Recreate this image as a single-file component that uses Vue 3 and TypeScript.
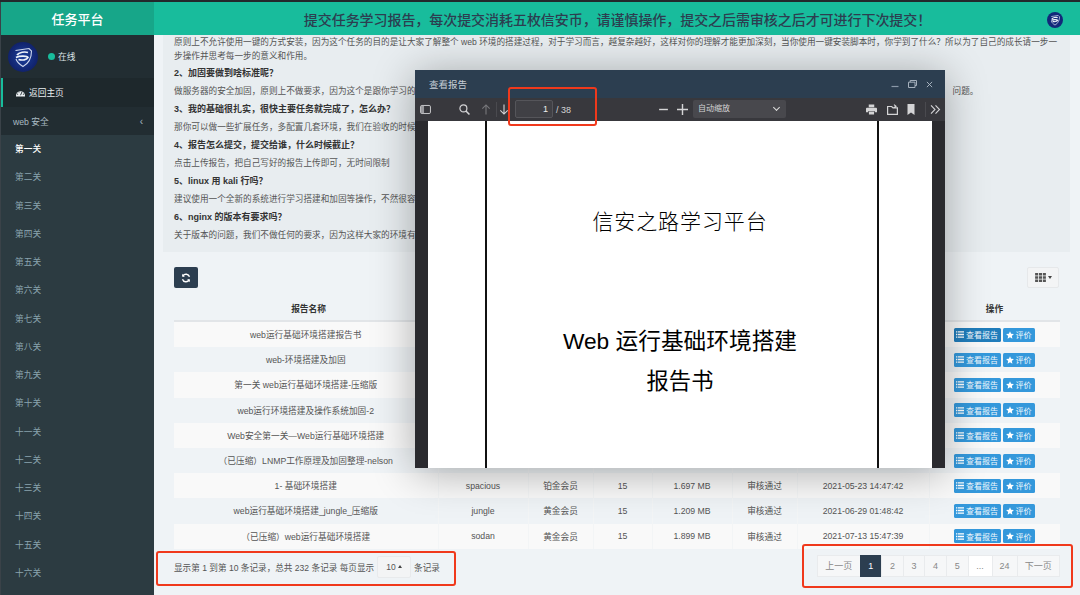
<script setup lang="ts">
interface Row {
  name: string; user: string; level: string; coin: string; size: string; state: string; time: string;
}
const levels: string[] = ['第一关','第二关','第三关','第四关','第五关','第六关','第七关','第八关','第九关','第十关','十一关','十二关','十三关','十四关','十五关','十六关'];
const rows: Row[] = [
  { name: 'web运行基础环境搭建报告书', user: '', level: '', coin: '', size: '', state: '', time: '' },
  { name: 'web-环境搭建及加固', user: '', level: '', coin: '', size: '', state: '', time: '' },
  { name: '第一关 web运行基础环境搭建-压缩版', user: '', level: '', coin: '', size: '', state: '', time: '' },
  { name: 'web运行环境搭建及操作系统加固-2', user: '', level: '', coin: '', size: '', state: '', time: '' },
  { name: 'Web安全第一关—Web运行基础环境搭建', user: '', level: '', coin: '', size: '', state: '', time: '' },
  { name: '（已压缩）LNMP工作原理及加固整理-nelson', user: '', level: '', coin: '', size: '', state: '', time: '' },
  { name: '1- 基础环境搭建', user: 'spacious', level: '铂金会员', coin: '15', size: '1.697 MB', state: '审核通过', time: '2021-05-23 14:47:42' },
  { name: 'web运行基础环境搭建_jungle_压缩版', user: 'jungle', level: '黄金会员', coin: '15', size: '1.209 MB', state: '审核通过', time: '2021-06-29 01:48:42' },
  { name: '（已压缩）web运行基础环境搭建', user: 'sodan', level: '黄金会员', coin: '15', size: '1.899 MB', state: '审核通过', time: '2021-07-13 15:47:39' },
];
const pages: string[] = ['上一页','1','2','3','4','5','...','24','下一页'];
</script>

<template>
  <div class="app">
    <aside class="sidebar">
      <div class="brand">任务平台</div>
      <div class="user">
        <svg class="avatar" viewBox="0 0 30 30">
          <defs>
            <radialGradient id="avatarFill" cx="50%" cy="50%" r="55%">
              <stop offset="0%" stop-color="#1c3f9c" />
              <stop offset="100%" stop-color="#0f1f66" />
            </radialGradient>
          </defs>
          <circle cx="15" cy="15" r="15" fill="url(#avatarFill)" />
          <path d="M7.5 8.5 L21 6.5 L23.5 9 C23.5 16 20.5 21.5 15 24.5 C11.5 22.5 9 20 8 17" fill="none" stroke="#cfd8ee" stroke-width="1.1" />
          <path d="M9 13 C11 10 17 9.5 20 10.5 M8 15.5 C12 13.5 19 14 20 15.5 C19 18 14 18.5 10.5 17.5" fill="none" stroke="#eef2fa" stroke-width="1.7" />
        </svg>
        <span class="dot"></span><span class="online">在线</span>
      </div>
      <div class="home">
        <svg class="home-icon" viewBox="0 0 12 10">
          <path d="M0 8.5 A6 6 0 0 1 12 8.5 L12 9.5 L0 9.5 Z" fill="#eef2f4" />
          <path d="M6 8 L8 3.5" stroke="#1e282c" stroke-width="1.2" />
          <circle cx="2.2" cy="6.5" r=".7" fill="#1e282c" /><circle cx="9.8" cy="6.5" r=".7" fill="#1e282c" /><circle cx="4" cy="3.6" r=".7" fill="#1e282c" />
        </svg>
        返回主页
      </div>
      <div class="group"><span>web 安全</span><span class="chev">‹</span></div>
      <ul class="levels">
        <li v-for="(l, i) in levels" :key="l" :class="{ active: i === 0 }">{{ l }}</li>
      </ul>
    </aside>

    <main class="main">
      <header class="topbar">
        <h1>提交任务学习报告，每次提交消耗五枚信安币，请谨慎操作，提交之后需审核之后才可进行下次提交！</h1>
        <svg class="top-avatar" viewBox="0 0 30 30">
          <circle cx="15" cy="15" r="15" fill="#12287a" />
          <path d="M8 8.5 L21 6.5 L23.5 9 C23.5 16 20.5 21.5 15 24.5 C11.5 22.5 9 20 8 17" fill="none" stroke="#cfd8ee" stroke-width="1.4" />
          <path d="M9 13 C11 10 17 9.5 20 10.5 M8 15.5 C12 13.5 19 14 20 15.5 C19 18 14 18.5 10.5 17.5" fill="none" stroke="#eef2fa" stroke-width="2.2" />
        </svg>
      </header>

      <section class="faq">
        <p class="lead">原则上不允许使用一键的方式安装，因为这个任务的目的是让大家了解整个 web 环境的搭建过程，对于学习而言，越复杂越好，这样对你的理解才能更加深刻，当你使用一键安装脚本时，你学到了什么？所以为了自己的成长请一步一步操作并思考每一步的意义和作用。</p>
        <h4>2、加固要做到啥标准呢？</h4>
        <p class="split"><span>做服务器的安全加固，原则上不做要求，因为这个是跟你学习的</span><span>问题。</span></p>
        <h4>3、我的基础很扎实，很快主要任务就完成了，怎么办？</h4>
        <p>那你可以做一些扩展任务，多配置几套环境，我们在验收的时候</p>
        <h4>4、报告怎么提交，提交给谁，什么时候截止？</h4>
        <p>点击上传报告，把自己写好的报告上传即可，无时间限制</p>
        <h4>5、linux 用 kali 行吗？</h4>
        <p>建议使用一个全新的系统进行学习搭建和加固等操作，不然很容</p>
        <h4>6、nginx 的版本有要求吗？</h4>
        <p>关于版本的问题，我们不做任何的要求，因为这样大家的环境有</p>
      </section>

      <div class="tools">
        <button class="refresh" aria-label="刷新">
          <svg viewBox="0 0 12 12" width="10" height="10" fill="none" stroke="#fff" stroke-width="1.7">
            <path d="M10.2 4.6 A4.4 4.4 0 0 0 2.3 3.6" /><path d="M1.8 7.4 A4.4 4.4 0 0 0 9.7 8.4" />
            <path d="M1.4 1 V4.4 H4.6 Z M10.6 11 V7.6 H7.4 Z" fill="#fff" stroke="none" />
          </svg>
        </button>
        <button class="columns" aria-label="列">
          <svg viewBox="0 0 12 10" width="11" height="9" fill="#555">
            <path d="M0 0h3.4v2.8H0zM4.3 0h3.4v2.8H4.3zM8.6 0H12v2.8H8.6zM0 3.6h3.4v2.8H0zM4.3 3.6h3.4v2.8H4.3zM8.6 3.6H12v2.8H8.6zM0 7.2h3.4V10H0zM4.3 7.2h3.4V10H4.3zM8.6 7.2H12V10H8.6z" />
          </svg>
          <i class="caret"></i>
        </button>
      </div>

      <table class="grid">
        <colgroup>
          <col style="width:264px" /><col style="width:90px" /><col style="width:65px" /><col style="width:59px" />
          <col style="width:80px" /><col style="width:65px" /><col style="width:132px" /><col style="width:131px" />
        </colgroup>
        <thead>
          <tr><th>报告名称</th><th></th><th></th><th></th><th></th><th></th><th></th><th>操作</th></tr>
        </thead>
        <tbody>
          <tr v-for="(r, i) in rows" :key="r.name">
            <td>{{ r.name }}</td><td>{{ r.user }}</td><td>{{ r.level }}</td><td>{{ r.coin }}</td>
            <td>{{ r.size }}</td><td>{{ r.state }}</td><td>{{ r.time }}</td>
            <td>
              <div class="ops">
                <span class="btn wide" :class="{ hover: i === 0 }">
                  <svg viewBox="0 0 10 8" width="8" height="7" fill="#fff"><path d="M0 0h1.6v1.6H0zM2.4 0H10v1.6H2.4zM0 3.2h1.6v1.6H0zM2.4 3.2H10v1.6H2.4zM0 6.4h1.6V8H0zM2.4 6.4H10V8H2.4z" /></svg>
                  查看报告
                </span>
                <span class="btn">
                  <svg viewBox="0 0 10 10" width="8" height="8" fill="#fff"><path d="M5 .3 6.4 3.5 9.9 3.9 7.3 6.2 8 9.7 5 7.9 2 9.7 2.7 6.2.1 3.9 3.6 3.5Z" /></svg>
                  评价
                </span>
              </div>
            </td>
          </tr>
        </tbody>
      </table>

      <footer class="foot">
        <div class="summary">
          <span>显示第 1 到第 10 条记录，总共 232 条记录 每页显示</span>
          <span class="size-select">10<i class="caret-up"></i></span>
          <span>条记录</span>
        </div>
        <nav class="pager">
          <span v-for="p in pages" :key="p" class="page" :class="{ current: p === '1', gap: p === '...', edge: p.length > 2 && p !== '...', wide: p === '24' }">{{ p }}</span>
        </nav>
      </footer>
    </main>

    <div class="modal">
      <div class="modal-title">
        <span>查看报告</span>
        <div class="win">
          <svg viewBox="0 0 8 8" width="8" height="8" stroke="#8b99a8" fill="none"><path d="M.5 6.5H7.5" stroke-width="1.2" /></svg>
          <svg viewBox="0 0 9 8" width="9" height="8" stroke="#a5b0bc" fill="none"><path d="M.5 2.2H7V7.5H.5ZM2.2 2V.5H8.5V5.5H7" /></svg>
          <svg viewBox="0 0 8 8" width="7" height="7" stroke="#b6c0ca" fill="none"><path d="M1 1 7 7M7 1 1 7" /></svg>
        </div>
      </div>
      <div class="pdf-bar">
        <svg class="ic ic-side" viewBox="0 0 12 10" fill="none" stroke="#d4d4d6"><rect x=".6" y=".6" width="10.8" height="8.8" rx="1.4" /><path d="M1 1h3.4v8H1Z" fill="#9a9a9e" stroke="none" /></svg>
        <svg class="ic ic-search" viewBox="0 0 12 12" fill="none" stroke="#d4d4d6" stroke-width="1.3"><circle cx="4.8" cy="4.8" r="3.8" /><path d="M7.6 7.6 11.4 11.4" stroke-width="1.7" /></svg>
        <svg class="ic ic-up" viewBox="0 0 10 12" fill="none" stroke="#77777b" stroke-width="1.2"><path d="M5 11.5V1M1 5 5 1 9 5" /></svg>
        <i class="sep"></i>
        <svg class="ic ic-down" viewBox="0 0 10 12" fill="none" stroke="#d4d4d6" stroke-width="1.2"><path d="M5 .5V11M1 7l4 4 4-4" /></svg>
        <span class="page-input">1</span>
        <span class="page-total">/ 38</span>
        <svg class="ic ic-minus" viewBox="0 0 10 10" stroke="#d4d4d6" stroke-width="1.3"><path d="M1 5H9" /></svg>
        <svg class="ic ic-plus" viewBox="0 0 10 10" stroke="#d4d4d6" stroke-width="1.3"><path d="M0 5H10M5 0V10" /></svg>
        <span class="zoom-select">自动缩放<i class="zoom-chev"></i></span>
        <svg class="ic ic-print" viewBox="0 0 12 11" fill="#d4d4d6"><path d="M3 0h6v3H3ZM1 3.6h10a1 1 0 0 1 1 1V8.5H9.5V7h-7v1.5H0V4.6a1 1 0 0 1 1-1ZM3.2 7.8h5.6V11H3.2Z" /></svg>
        <svg class="ic ic-open" viewBox="0 0 11 11" fill="none" stroke="#d4d4d6" stroke-width="1.2"><path d="M.6 2.5V10.4H10.4V3.8H6L4.6 2.5ZM7 .6 9 2.2 7 3.8" /></svg>
        <svg class="ic ic-mark" viewBox="0 0 8 11" fill="#d4d4d6"><path d="M.5 0h7v11L4 8.4.5 11Z" /></svg>
        <i class="sep two"></i>
        <svg class="ic ic-more" viewBox="0 0 11 10" fill="none" stroke="#d4d4d6" stroke-width="1.1"><path d="M1 .8 5 5 1 9.2M5.5.8 9.5 5 5.5 9.2" /></svg>
      </div>
      <div class="viewer">
        <div class="paper">
          <div class="sheet">
            <div class="sub">信安之路学习平台</div>
            <div class="doc-title">Web 运行基础环境搭建</div>
            <div class="doc-sub">报告书</div>
          </div>
        </div>
      </div>
    </div>

    <i class="mark-box box-page"></i>
    <i class="mark-box box-summary"></i>
    <i class="mark-box box-pager"></i>
  </div>
</template>

<style>
html, body { margin: 0; padding: 0; background: #eff3f6; }
</style>

<style scoped>
.app { position: relative; display: flex; width: 1080px; height: 595px; overflow: hidden; background: #eff3f6; color: #555; font-family: "Liberation Sans", "Noto Sans CJK SC", sans-serif; font-size: 9px; border-top: 2px solid #23282c; box-sizing: border-box; }
.sidebar { width: 154px; flex: none; background: #2c3b41; border-left: 1px solid #3a4248; box-sizing: border-box; }
.brand { height: 33px; background: #17a689; color: #fff; font-size: 13px; font-weight: 500; display: flex; align-items: center; justify-content: center; padding-bottom: 1px; box-sizing: border-box; }
.user { height: 43px; background: #222d32; display: flex; align-items: center; padding-left: 7px; color: #dfe6e9; font-size: 8.7px; }
.avatar { width: 30px; height: 30px; margin-right: 10px; }
.dot { width: 7px; height: 7px; border-radius: 50%; background: #18bc9c; margin-right: 3px; }
.home { height: 29px; background: #1e282c; border-left: 2px solid #18bc9c; color: #e8edf0; display: flex; align-items: center; padding-left: 13px; font-size: 8.7px; box-sizing: border-box; }
.home-icon { width: 9px; height: 8px; margin-right: 4px; }
.group { height: 28px; background: #222d32; color: #a9bac2; display: flex; align-items: center; justify-content: space-between; padding: 0 11px 0 12px; font-size: 8.7px; }
.chev { font-size: 10px; }
.levels { margin: 0; padding: 0; list-style: none; }
.levels li { height: 28.25px; line-height: 28.25px; padding-left: 14px; color: #8aa4af; font-size: 8.7px; }
.levels li.active { color: #fff; font-weight: 500; }
.main { flex: 1; min-width: 0; }
.topbar { height: 33px; background: #18bc9c; display: flex; align-items: center; position: relative; justify-content: center; padding: 0 0 0 1px; }
.topbar h1 { margin: 0; font-size: 14px; font-weight: 500; color: #2c3e50; white-space: nowrap; letter-spacing: -.06px; }
.top-avatar { position: absolute; right: 17px; top: 10px; width: 16px; height: 16px; }
.faq { margin-left: 9px; width: 907px; height: 217px; background: #e8edf0; padding: 0 11px; box-sizing: border-box; overflow: hidden; }
.faq p, .faq h4 { margin: 0; line-height: 18px; font-size: 8.65px; white-space: nowrap; }
.faq h4 { font-size: 9px; color: #333; font-weight: 700; }
.faq p.lead { white-space: normal; line-height: 14px; height: 28px; margin-bottom: 1px; }
.faq p.split { display: flex; gap: 537px; }
.tools { display: flex; justify-content: space-between; margin: 15px 21px 0 20px; height: 21px; }
.refresh { width: 24px; height: 21px; border: 0; border-radius: 2px; background: #2c3e50; padding: 0; display: flex; align-items: center; justify-content: center; }
.columns { width: 32px; height: 21px; background: #f3f4f5; border: 1px solid #e6e8ea; border-radius: 2px; padding: 0; display: flex; align-items: center; justify-content: center; gap: 2px; }
.caret { width: 0; height: 0; border-left: 2.5px solid transparent; border-right: 2.5px solid transparent; border-top: 3px solid #444; }
.caret-up { width: 0; height: 0; margin-left: 2px; border-left: 2.5px solid transparent; border-right: 2.5px solid transparent; border-bottom: 3px solid #444; }
.grid { margin: 8px 0 0 20px; width: 886px; table-layout: fixed; border-collapse: collapse; font-size: 8.7px; color: #555; }
.grid th { height: 25px; font-size: 8.7px; color: #333; font-weight: 700; border-bottom: 2px solid #e2e5e8; box-sizing: border-box; padding: 0; text-align: center; }
.grid th:first-child { padding-left: 5px; }
.grid td { height: 25.2px; padding: 0; text-align: center; white-space: nowrap; border-right: 1px solid #f3f5f6; }
.grid td:last-child { border-right: 0; }
.grid tbody tr:nth-child(odd) { background: #f9f9f9; }
.ops { display: flex; justify-content: flex-start; gap: 2px; padding-left: 24px; }
.btn { height: 14px; width: 32px; background: #3498db; color: #f2f8fd; font-size: 8px; border-radius: 1.5px; display: flex; align-items: center; justify-content: center; gap: 2px; flex: none; }
.btn.wide { width: 47px; }
.btn.hover { background: #217dbb; }
.foot { display: flex; justify-content: space-between; align-items: center; margin: 6px 20px 0 20px; height: 24px; width: 886px; }
.summary { display: flex; align-items: center; color: #555; font-size: 8.6px; }
.size-select { width: 34px; height: 22px; margin: 0 3px; background: #f3f4f5; border: 1px solid #e8eaec; border-radius: 2px; box-sizing: border-box; display: flex; align-items: center; justify-content: center; font-size: 8.5px; }
.pager { display: flex; height: 22px; margin-bottom: 2px; }
.page { width: 22.6px; display: flex; align-items: center; justify-content: center; background: #f6f7f8; border: 1px solid #e9ebed; margin-left: -1px; color: #888; font-size: 9px; box-sizing: border-box; }
.page.edge { width: 43.5px; }
.page.gap { width: 25px; background: #fff; }
.page.wide { width: 26px; }
.page.current { background: #2c3e50; color: #fff; border-color: #2c3e50; }
.modal { position: absolute; left: 415px; top: 68px; width: 530px; height: 398px; background: #2a2a2e; box-shadow: 0 4px 40px rgba(0,0,0,.32); display: flex; flex-direction: column; }
.modal-title { height: 28px; flex: none; background: #2c3e50; color: #c6ced6; font-size: 9.5px; display: flex; align-items: center; justify-content: space-between; padding: 0 12px 0 14px; }
.win { display: flex; gap: 9px; align-items: center; }
.pdf-bar { height: 23px; flex: none; background: #38383d; color: #d4d4d6; display: flex; align-items: center; position: relative; }
.ic { position: absolute; height: 11px; width: 11px; }
.ic-side { left: 5px; }
.ic-search { left: 44px; }
.ic-up { left: 66px; width: 10px; }
.sep { position: absolute; left: 81px; top: 4px; height: 15px; width: 1px; background: #4a4a4f; }
.sep.two { left: 510px; }
.ic-down { left: 84px; width: 10px; }
.page-input { position: absolute; left: 100px; top: 2px; width: 38px; height: 18px; box-sizing: border-box; border: 1px solid #55555a; border-radius: 2px; background: #404045; text-align: right; padding-right: 4px; line-height: 16px; font-size: 9px; color: #eee; }
.page-total { position: absolute; left: 141px; font-size: 9px; }
.ic-minus { left: 243px; }
.ic-plus { left: 262px; }
.zoom-select { position: absolute; left: 278px; top: 2px; width: 93px; height: 18px; background: #48484d; border-radius: 2px; padding-left: 5px; box-sizing: border-box; line-height: 18px; font-size: 8px; }
.zoom-chev { position: absolute; right: 7px; top: 5px; width: 4px; height: 4px; border-right: 1.2px solid #ddd; border-bottom: 1.2px solid #ddd; transform: rotate(45deg); }
.ic-print { left: 451px; }
.ic-open { left: 472px; }
.ic-mark { left: 492px; width: 8px; }
.ic-more { left: 515px; }
.viewer { flex: 1; min-height: 0; padding: 0 13px; overflow: hidden; }
.paper { height: 100%; background: #fff; padding: 0 53px 0 57px; box-sizing: border-box; }
.sheet { height: 100%; border-left: 2px solid #111; border-right: 2px solid #111; color: #000; text-align: center; box-sizing: border-box; display: flex; flex-direction: column; align-items: center; padding-right: 4px; }
.sub { font-size: 21px; letter-spacing: .9px; font-weight: 300; margin-top: 84px; line-height: 30px; font-family: "Noto Sans CJK SC", sans-serif; }
.doc-title { font-size: 22.7px; margin-top: 90px; line-height: 32px; font-weight: 400; font-family: "Liberation Sans", "Noto Sans CJK SC", sans-serif; }
.doc-sub { font-size: 22.3px; margin-top: 6px; line-height: 32px; font-family: "Noto Sans CJK SC", sans-serif; }
.mark-box { position: absolute; border: 2px solid #f0391c; border-radius: 3px; box-sizing: border-box; }
.box-page { left: 508px; top: 85px; width: 89px; height: 39px; }
.box-summary { left: 156px; top: 549px; width: 300px; height: 35px; }
.box-pager { left: 802px; top: 542px; width: 271px; height: 44px; }
</style>
